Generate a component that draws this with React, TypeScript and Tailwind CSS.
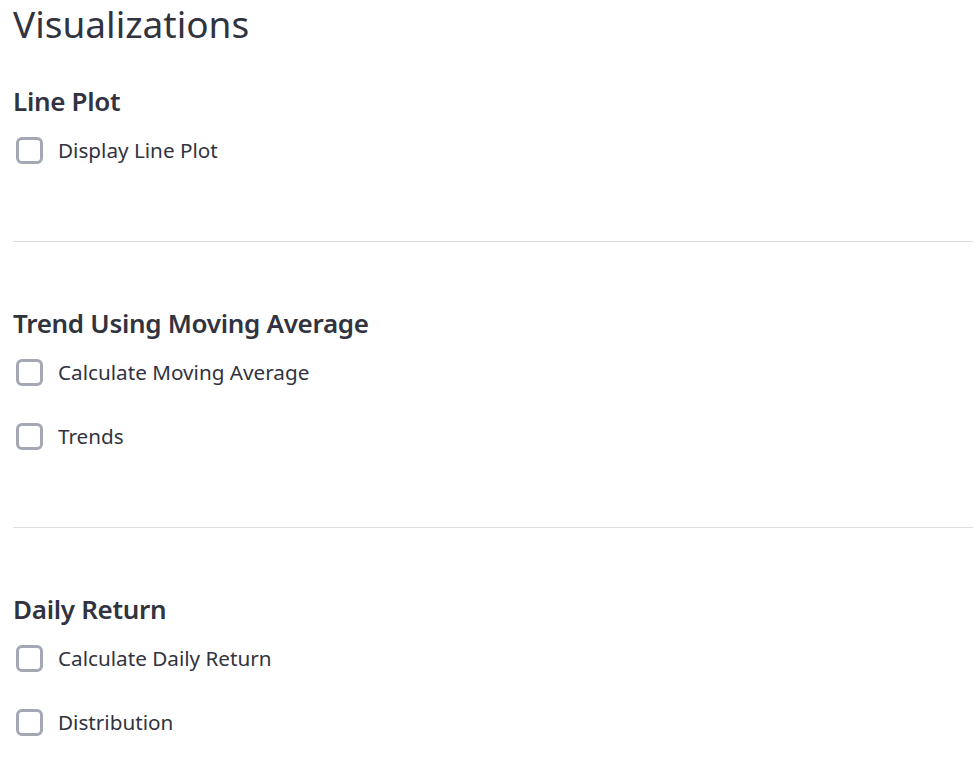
import React from 'react';

const sections = [
  { title: 'Line Plot', items: ['Display Line Plot'] },
  { title: 'Trend Using Moving Average', items: ['Calculate Moving Average', 'Trends'] },
  { title: 'Daily Return', items: ['Calculate Daily Return', 'Distribution'] },
];

const Checkbox: React.FC<{ label: string; className?: string }> = ({ label, className }) => (
  <label className={`flex h-[40px] items-center gap-[15px] cursor-pointer ${className ?? ''}`}>
    <span className="ml-[3px] h-[27px] w-[27px] rounded-[6px] border-[3px] border-[#a3a8b4] bg-white" />
    <span className="text-[20.7px] leading-[28px] text-[#31333f]">{label}</span>
  </label>
);

export default function App() {
  return (
    <div className="min-h-screen bg-white pl-[13px] pr-[5px] font-['Noto_Sans',sans-serif] text-[#31333f]">
      <h1 className="h-[48px] text-[37px] leading-[48px] font-normal">Visualizations</h1>

      {sections.map((s, i) => (
        <div key={s.title}>
          {i > 0 && <hr className="border-0 border-t border-[#dcdde3]" />}
          <h3
            className={`h-[36px] text-[26px] leading-[36px] font-semibold tracking-[-0.3px] ${
              i === 0 ? 'mt-[35px]' : 'mt-[63px]'
            }`}
          >
            {s.title}
          </h3>
          <div className="mt-[11px]">
            {s.items.map((it, j) => (
              <Checkbox key={it} label={it} className={j > 0 ? 'mt-[24px]' : ''} />
            ))}
          </div>
          {i < sections.length - 1 && <div className="h-[71px]" />}
        </div>
      ))}
    </div>
  );
}
